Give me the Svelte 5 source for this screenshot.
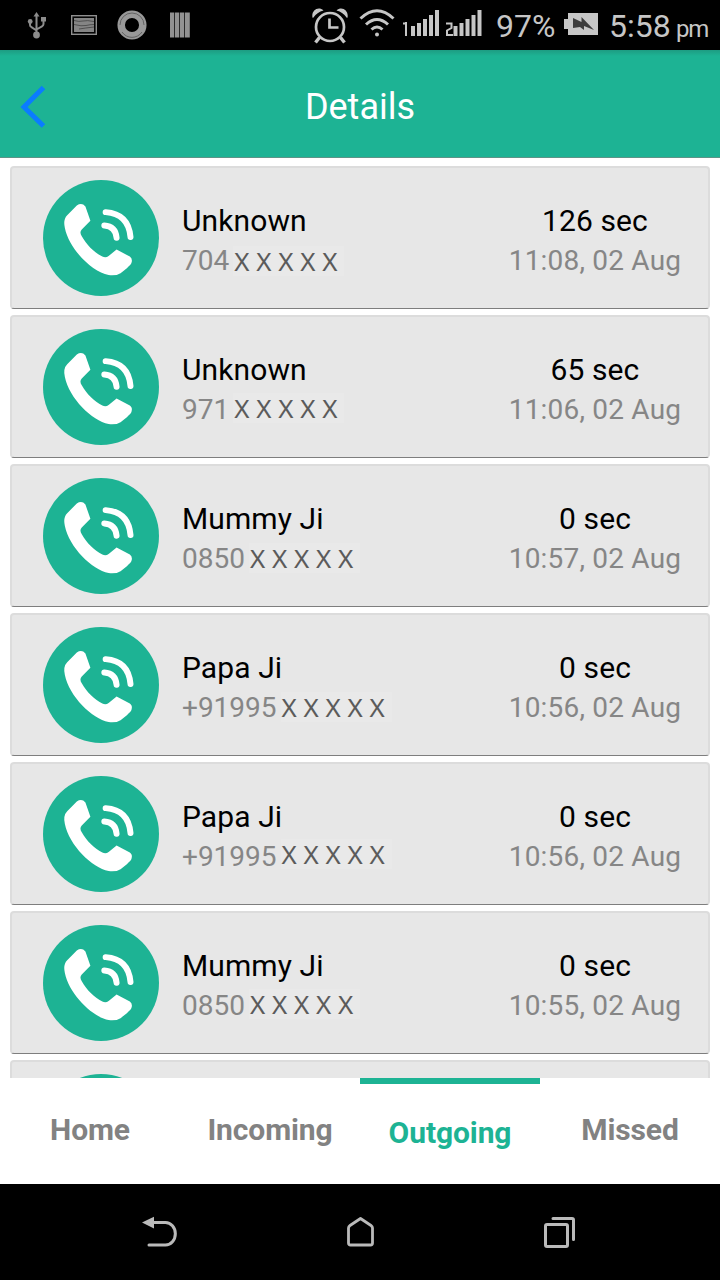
<script>
  const calls = [
    { name: 'Unknown', number: '704', shift: 0, duration: '126 sec', time: '11:08, 02 Aug' },
    { name: 'Unknown', number: '971', shift: -2, duration: '65 sec', time: '11:06, 02 Aug' },
    { name: 'Mummy Ji', number: '0850', shift: -1, duration: '0 sec', time: '10:57, 02 Aug' },
    { name: 'Papa Ji', number: '+91995', shift: -1, duration: '0 sec', time: '10:56, 02 Aug' },
    { name: 'Papa Ji', number: '+91995', shift: -3, duration: '0 sec', time: '10:56, 02 Aug' },
    { name: 'Mummy Ji', number: '0850', shift: -2, duration: '0 sec', time: '10:55, 02 Aug' },
    { name: '', number: '', shift: 0, duration: '', time: '' }
  ];
  const tabs = ['Home', 'Incoming', 'Outgoing', 'Missed'];
  const active = 'Outgoing';
</script>

<div class="screen">
  <div class="status">
    <svg class="usb" width="20" height="28" viewBox="0 0 20 28" fill="#8c8c8c" stroke="#8c8c8c">
      <path d="M9.5 3V24M3 10v3q0 1.500 1.500 2.200l5 3.300M16.500 8v4q0 1.500-1.500 2.300l-5.500 3.200" fill="none" stroke-width="2" />
      <path d="M9.500 0l3 4.500h-6z" stroke="none" />
      <circle cx="9.500" cy="23" r="3.400" stroke="none" />
      <circle cx="3.200" cy="9.500" r="2.400" stroke="none" />
      <path d="M14 5h5v4.500h-5z" stroke="none" />
    </svg>
    <svg class="photo" width="26" height="20" viewBox="0 0 26 20">
      <rect x=".7" y=".7" width="24.600" height="18.600" fill="#050505" stroke="#8f8f8f" stroke-width="1.400" />
      <rect x="3" y="3" width="20" height="14" fill="#858585" />
      <path d="M3 5.500q5 1.500 9 .5t11 .5M3 9.500q8 2 12 1t8-1M8 14q6-1 15-2" fill="none" stroke="#4a4a4a" stroke-width=".9" />
    </svg>
    <svg class="disc" width="30" height="30" viewBox="0 0 30 30" fill="none">
      <circle cx="15" cy="15" r="10.800" stroke="#999" stroke-width="7.500" />
      <path d="M3 15a12 12 0 0 1 24 0M5 22a12 12 0 0 0 20 0" stroke="#555" stroke-width=".8" />
    </svg>
    <svg class="books" width="20" height="26" viewBox="0 0 20 26" fill="#929292">
      <path d="M0 .5h4.300v25H0zM5 .5h4.300v25H5zM10 .5h4.300v25H10zM15 .5h4.800v25H15z" />
    </svg>
    <svg class="alarm" width="36" height="37" viewBox="0 0 36 37" fill="none" stroke="#c6c6c6">
      <circle cx="18" cy="20" r="14" stroke-width="2.700" />
      <path d="M17.500 11.500v9H26.500" stroke-width="2.700" />
      <path d="M7.500 30.500l-4 5M28.500 30.500l4 5" stroke-width="3.400" />
      <path d="M.5 10.500C-1 4 6-1.500 11.500 3.500Q5 5 1 11zM35.500 10.500C37 4 30-1.500 24.500 3.500Q31 5 35 11z" fill="#c6c6c6" stroke="none" />
    </svg>
    <svg class="wifi" width="36" height="28" viewBox="0 0 36 28" fill="none" stroke="#c6c6c6" stroke-width="3">
      <path d="M1.500 9.500q16.500-15.500 33 0M7 15.500q11-10 22 0M12.500 20.500q5.500-5 11 0" />
      <circle cx="18" cy="25.600" r="2" fill="#c6c6c6" stroke="none" />
    </svg>
    <svg class="signal one" width="36" height="27" viewBox="0 0 36 27" fill="#c6c6c6">
      <path d="M2 12h2v14H2zM0 12.500h3v2H0z" />
      <path d="M8 16h4v10H8zM14 13h4v13h-4zM20 9h4v17h-4zM26 5h4v21h-4zM32 0h4v26h-4z" />
    </svg>
    <svg class="signal two" width="37" height="27" viewBox="0 0 37 27" fill="#c6c6c6">
      <path d="M1 13.500H6.500v4.500L2 20.500v4.500H8" fill="none" stroke="#c6c6c6" stroke-width="2" />
      <path d="M8.500 16h4v10h-4zM14.500 13h4v13h-4zM20.500 9h4v17h-4zM26.500 5h4v21h-4zM32.500 0h4v26h-4z" />
    </svg>
    <span class="percent">97%</span>
    <svg class="battery" width="34" height="22" viewBox="0 0 34 22">
      <path d="M4 0h30v22H4v-6H0V6h4z" fill="#c6c6c6" />
      <path d="M9 5L17.500 9V4L30 17L20 13V17L16 14L9 15z" fill="#3c3c3c" />
    </svg>
    <span class="clock">5:58</span><span class="pm">pm</span>
  </div>

  <header>
    <svg width="28" height="44" viewBox="0 0 28 44"><path d="M24.500 2.500L5 22l19.500 19" fill="none" stroke="#0a7cff" stroke-width="5" /></svg>
    <h1>Details</h1>
  </header>

  <main>
    {#each calls as call}
      <section class="card">
        <svg class="phone" width="116" height="116" viewBox="9 13 350 350">
          <circle cx="184" cy="188" r="175" fill="#1db394" />
          <path d="M75 158Q69 132 82 119L111 90Q126 80 137 93L152 136L126 162Q118 170 126 183C141 209 163 232 188 244Q199 249 207 242L231 223L271 244Q280 250 276 263Q275 268 262 279L243 294Q229 303 207 300C157 290 88 222 75 158Z" fill="#fff" />
          <path d="M194 150q34 2 37 37M198 110q69 5 75 75" fill="none" stroke="#fff" stroke-width="18" stroke-linecap="round" />
        </svg>
        <div class="who">
          <div class="name">{call.name}</div>
          <div class="number">
            <span>{call.number}</span>
            {#if call.number}<span class="mask" style:--shift="{call.shift}px">X X X X X</span>{/if}
          </div>
        </div>
        <div class="when">
          <div class="name">{call.duration}</div>
          <div class="time">{call.time}</div>
        </div>
      </section>
    {/each}
  </main>

  <nav class="tabs">
    {#each tabs as tab}
      <div class="tab" class:active={tab === active}>{tab}</div>
    {/each}
  </nav>

  <div class="keys">
    <svg width="36" height="34" viewBox="0 0 36 34" fill="none" stroke="#bababa" stroke-width="3">
      <path d="M9 6.500h14.500a9.800 11.200 0 0 1 0 22.500H7" stroke-linecap="round" />
      <path d="M0 6.500L12 .8v11.700z" fill="#bababa" stroke="none" />
    </svg>
    <svg width="30" height="34" viewBox="0 0 30 34"><path d="M2.500 12Q2.500 10.500 4 9.500L14.500 2.500L25 9.500Q26.500 10.500 26.500 12V27Q26.500 29 24.500 29H4.500Q2.500 29 2.500 27Z" fill="none" stroke="#bababa" stroke-width="2.800" stroke-linejoin="round" /></svg>
    <svg width="32" height="34" viewBox="0 0 32 34" fill="none" stroke="#bababa" stroke-width="3">
      <rect x="1.500" y="8.500" width="22" height="22" rx="1.500" />
      <path d="M9 2.500h19q1.500 0 1.500 1.500v19.500" stroke-linecap="round" />
    </svg>
  </div>
</div>

<style>
  :global(body) { margin: 0; background: #fff; }
  .screen {
    width: 720px; height: 1280px; overflow: hidden;
    display: flex; flex-direction: column;
    font-family: Roboto, "Liberation Sans", sans-serif; background: #fff;
  }
  svg { display: block; flex: none; }
  .status {
    height: 50px; flex: none; display: flex; align-items: flex-start;
    box-sizing: border-box; background: #000; color: #c6c6c6; white-space: nowrap;
  }
  .usb { margin: 12px 0 0 27px; }
  .photo { margin: 15px 0 0 24px; }
  .disc { margin: 10px 0 0 20px; }
  .books { margin: 12px 0 0 23px; }
  .alarm { margin: 7px 0 0 122px; }
  .wifi { margin: 9px 0 0 11px; }
  .one { margin: 10px 0 0 8px; }
  .two { margin: 10px 0 0 6px; }
  .percent { width: 60px; margin: 7px 0 0 14px; font-size: 32px; line-height: 38px; }
  .battery { margin: 13px 0 0 8px; }
  .clock { width: 61px; margin: 7px 0 0 11px; font-size: 32px; line-height: 38px; }
  .pm { margin: 15px 0 0 6px; font-size: 24px; line-height: 29px; letter-spacing: -1.200px; }

  header {
    height: 108px; flex: none; box-sizing: border-box;
    display: grid; grid-template-columns: 100px 1fr 100px; align-items: center;
    border-bottom: 1px solid #5e9487;
    background: linear-gradient(#1d9c82, #1db394 6px);
  }
  header svg { margin: 6px 0 0 19px; }
  h1 { margin: 6px 0 0; text-align: center; font-size: 36px; line-height: 44px; font-weight: 400; color: #fff; }

  main {
    height: 920px; flex: none; box-sizing: border-box; overflow: hidden;
    padding: 8px 10px 0; display: flex; flex-direction: column; gap: 6px;
  }
  .card {
    height: 143px; flex: none; box-sizing: border-box; display: flex; align-items: flex-start;
    padding: 0 26px 0 31px; border: 2px solid #dcdcdc; border-bottom: 1px solid #7e7e7e;
    border-radius: 4px; background: #e7e7e7; white-space: nowrap;
  }
  .phone { margin-top: 12px; }
  .who { margin: 33px 0 0 23px; flex: 1; }
  .when { width: 174px; margin-top: 33px; text-align: center; }
  .name { height: 40px; font-size: 30px; line-height: 40px; letter-spacing: .1px; color: #000; }
  .number, .time { font-size: 28px; line-height: 40px; color: #868686; }
  .time { letter-spacing: .2px; }
  .number { display: flex; align-items: center; gap: 4px; }
  .mask {
    position: relative; top: var(--shift); padding: 0 7px 0 1px;
    font: 26px/30px "Noto Sans", sans-serif; color: #5b5b5b; background: #e9e9e9;
  }

  .tabs { height: 106px; flex: none; display: grid; grid-template-columns: repeat(4, 1fr); background: #fff; }
  .tab {
    box-sizing: border-box; text-align: center; font-size: 30px; line-height: 104px;
    font-weight: 700; letter-spacing: -.1px; color: #828282;
  }
  .active { border-top: 6px solid #1db394; line-height: 98px; color: #1db394; }
  .keys {
    height: 96px; flex: none; box-sizing: border-box; background: #000;
    padding: 32px 144px 0 142px; display: flex; justify-content: space-between;
  }
</style>
